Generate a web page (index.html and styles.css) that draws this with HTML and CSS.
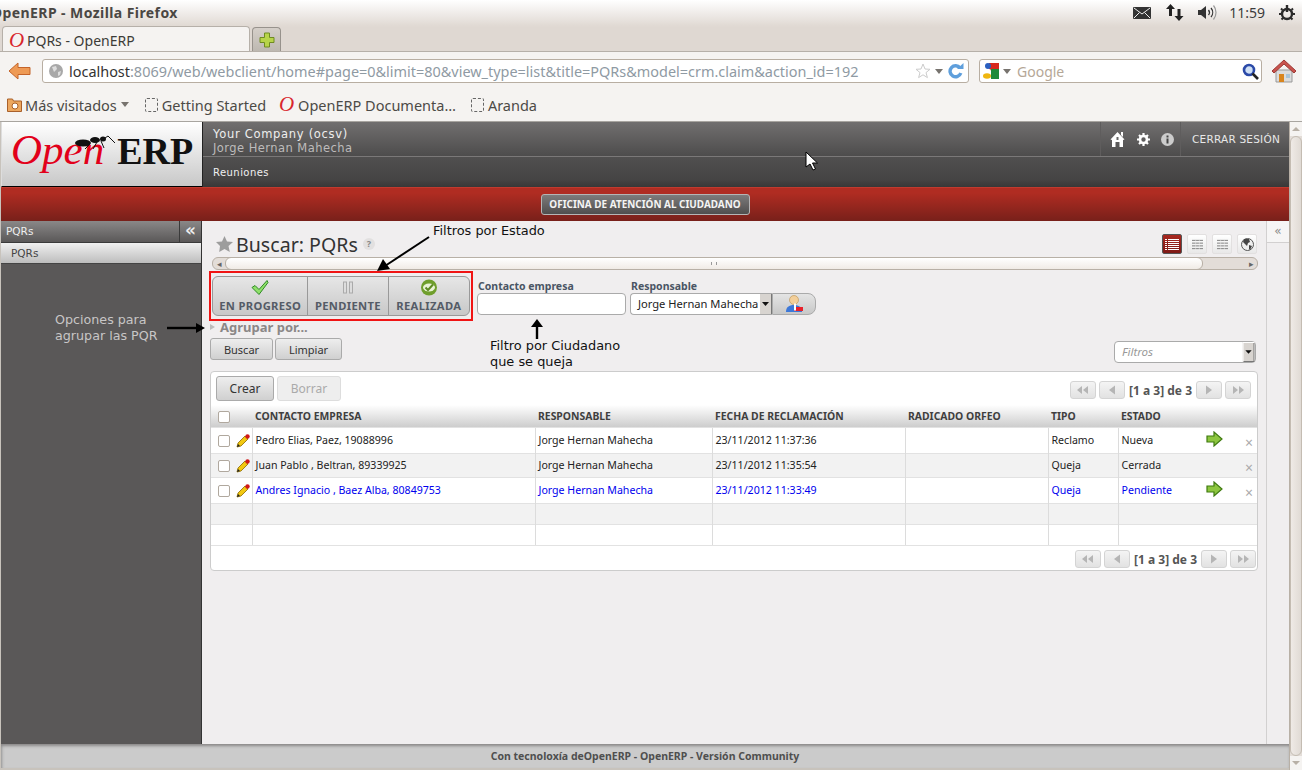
FILE: index.html
```html
<!DOCTYPE html>
<html lang="es">
<head>
<meta charset="utf-8">
<title>PQRs - OpenERP</title>
<link rel="stylesheet" href="styles.css">
</head>
<body>
<svg class="defs" width="0" height="0">
  <defs>
    <symbol id="i-first" viewBox="0 0 26 18"><path d="M7 9l5-4v8zM13 9l5-4v8z" fill="#b5b5b5"/></symbol>
    <symbol id="i-prev" viewBox="0 0 26 18"><path d="M10 9l6-4.500v9z" fill="#b5b5b5"/></symbol>
    <symbol id="i-next" viewBox="0 0 26 18"><path d="M16 9l-6-4.500v9z" fill="#b5b5b5"/></symbol>
    <symbol id="i-last" viewBox="0 0 26 18"><path d="M13 9l-5-4v8zM19 9l-5-4v8z" fill="#b5b5b5"/></symbol>
    <symbol id="i-pencil" viewBox="0 0 14 14"><path d="M1 13l1-4 7-7 3 3-7 7z" fill="#f2c811" stroke="#8a6a00" stroke-width=".8"/><path d="M1 13l1-3 2 2z" fill="#222"/><circle cx="11.500" cy="2.500" r="2.200" fill="#d01818"/></symbol>
    <symbol id="i-go" viewBox="0 0 17 16"><path d="M1 5h7V1l8 7-8 7v-4H1z" fill="#8dc63f" stroke="#3f7a10" stroke-width="1.200"/></symbol>
    <symbol id="i-lines" viewBox="0 0 14 12"><path d="M1 1.500h12M1 4.500h12M1 7.500h12M1 10.500h12" stroke="#777" stroke-width="1"/><path d="M5 1v11M9 1v11" stroke="#eee" stroke-width=".6"/></symbol>
    <symbol id="i-down" viewBox="0 0 13 22"><rect width="13" height="22" fill="#d8d4d0"/><path d="M0 0h13v1H1v21H0z" fill="#fff"/><path d="M12 1h1v21H1v-1h11z" fill="#777"/><path d="M3 9h7l-3.500 4z" fill="#111"/></symbol>
  </defs>
</svg>

<header class="chrome">
  <div class="titlebar">
    <span class="window-title">OpenERP - Mozilla Firefox</span>
    <div class="tray">
      <svg class="tray-mail" width="18" height="12" viewBox="0 0 18 12"><rect width="18" height="12" rx="1" fill="#333"/><path d="M1 1l8 6 8-6M1 11l5.500-5.500M17 11l-5.500-5.500" fill="none" stroke="#eee"/></svg>
      <svg class="tray-net" width="18" height="17" viewBox="0 0 18 17"><path d="M4.500 0L9 5H6v7H3V5H0zM13 17l-4.500-5h3V5h3v7h3z" fill="#222"/></svg>
      <svg class="tray-vol" width="20" height="17" viewBox="0 0 20 17"><path d="M0 6h3l5-4v13l-5-4H0z" fill="#333"/><path d="M10.500 6a4 4 0 010 5M13 4a7 7 0 010 9" fill="none" stroke="#333" stroke-width="1.300"/><path d="M15.500 1.500a11 11 0 010 14" fill="none" stroke="#999" stroke-width="1.200"/></svg>
      <span class="clock">11:59</span>
      <svg class="tray-power" width="16" height="16" viewBox="0 0 16 16"><circle cx="8" cy="9" r="5" fill="none" stroke="#2b2b2b" stroke-width="2.400"/><path d="M8 0v7" stroke="#2b2b2b" stroke-width="2.400"/><path d="M0 9h2M14 9h2M2 3.500l1.500 1.500M14 3.500L12.500 5M2.500 14.500L4 13M13.500 14.500L12 13" stroke="#2b2b2b" stroke-width="2"/></svg>
    </div>
  </div>
  <div class="tabstrip">
    <div class="tab"><span class="o-mark">O</span><span>PQRs - OpenERP</span></div>
    <div class="newtab"><svg width="16" height="16" viewBox="0 0 16 16"><path d="M5.500 1h5v4.500H15v5h-4.500V15h-5v-4.500H1v-5h4.500z" fill="#b7d44a" stroke="#6f8b22"/></svg></div>
  </div>
  <div class="navbar">
    <svg class="back" width="23" height="18" viewBox="0 0 23 18"><path d="M1 9l9-8v4.500h12v7H10V17z" fill="#ee9a55" stroke="#c4642a"/></svg>
    <div class="urlbar">
      <svg class="globe" width="14" height="14" viewBox="0 0 14 14"><circle cx="7" cy="7" r="7" fill="#a8a8a8"/><path d="M3 3l4-1 1 3-3 3zM9 8l3-1-1 4-2 1z" fill="#ddd"/></svg>
      <span class="url"><span class="url-host">localhost</span>:8069/web/webclient/home#page=0&amp;limit=80&amp;view_type=list&amp;title=PQRs&amp;model=crm.claim&amp;action_id=192</span>
      <svg class="star-o" width="16" height="16" viewBox="0 0 16 16"><path d="M8 1l2 5 5 .3-4 3.300 1.400 5L8 11.800l-4.400 2.800L5 9.600 1 6.300 6 6z" fill="#fff" stroke="#ccc"/></svg>
      <span class="caret-grey"></span>
      <svg class="reload" width="17" height="16" viewBox="0 0 17 16"><path d="M13 5a5.500 5.500 0 10.800 5" fill="none" stroke="#5f9fdc" stroke-width="3.400"/><path d="M10 6h6.500V0z" fill="#5f9fdc"/></svg>
    </div>
    <div class="searchbar">
      <svg class="gmark" width="16" height="16" viewBox="0 0 16 16"><rect x="6" width="10" height="8" fill="#d8281e"/><rect x="8" y="6" width="8" height="10" fill="#1f8a3a"/><circle cx="5" cy="3" r="3" fill="#2a5fc0"/><circle cx="6" cy="8" r="2" fill="#fff"/><ellipse cx="4" cy="13" rx="4" ry="2.800" fill="#efb60f"/></svg>
      <span class="caret-grey"></span>
      <span class="search-hint">Google</span>
      <svg class="magnify" width="17" height="17" viewBox="0 0 17 17"><circle cx="7" cy="7" r="5" fill="#cfe0f5" stroke="#2b4aa8" stroke-width="2.600"/><path d="M10.500 10.500L16 16" stroke="#222" stroke-width="2.600"/></svg>
    </div>
    <svg class="home" width="24" height="24" viewBox="0 0 24 24"><path d="M4 11h16v12H4z" fill="#dcdcdc" stroke="#999"/><path d="M0 12L12 1l12 11-2 2L12 5 2 14z" fill="#c9534d" stroke="#9c3a35"/><path d="M7 15h5v8H7z" fill="#d9851e"/><path d="M14 15h4v4h-4z" fill="#a9c4d8"/></svg>
  </div>
  <div class="bookmarks">
    <div class="bm bm-first">
      <svg width="15" height="15" viewBox="0 0 15 15"><path d="M.500 2h5l1 2h8v10.500H.500z" fill="#eca75f" stroke="#a9602a"/><circle cx="8" cy="9" r="3" fill="#fff" stroke="#a9602a"/></svg>
      <span>Más visitados</span><span class="caret-grey"></span>
    </div>
    <div class="bm bm-second"><span class="blank-page"></span><span>Getting Started</span></div>
    <div class="bm bm-third"><span class="o-mark o-small">O</span><span>OpenERP Documenta…</span></div>
    <div class="bm bm-fourth"><span class="blank-page"></span><span>Aranda</span></div>
  </div>
</header>

<div class="viewport">
  <div class="app">
    <div class="masthead">
      <div class="logo">
        <span class="logo-open">Open</span><span class="logo-erp">ERP</span>
        <svg class="ant" width="42" height="14" viewBox="0 0 42 14"><ellipse cx="8" cy="8" rx="8" ry="3.500" fill="#111"/><ellipse cx="20" cy="5" rx="5" ry="3" fill="#111"/><ellipse cx="28" cy="4" rx="3" ry="2.500" fill="#111"/><path d="M30 3l3-2 7 7M22 7l-4 7M26 6l3 7M15 9l-5 5" fill="none" stroke="#111"/></svg>
      </div>
      <div class="topnav">
        <div class="topnav-upper">
          <div class="account">
            <span class="company">Your Company (ocsv)</span>
            <span class="user">Jorge Hernan Mahecha</span>
          </div>
          <div class="top-icons">
            <svg width="15" height="17" viewBox="0 0 15 17"><path d="M7.500 1l7 7.500-1.500.5v7H9.500v-5h-4v5H2V9L.500 8.500z" fill="#fff"/><path d="M11 1h2v5l-2-2z" fill="#fff"/><path d="M6.500 6h2v3h-2z" fill="#666"/></svg>
            <svg width="13" height="13" viewBox="0 0 13 13"><circle cx="6.500" cy="6.500" r="3.500" fill="none" stroke="#fff" stroke-width="2.600"/><path d="M6.500 0v2.500M6.500 10.500V13M0 6.500h2.500M10.500 6.500H13M2 2l1.800 1.800M11 2L9.200 3.800M2 11l1.800-1.800M11 11L9.200 9.200" stroke="#fff" stroke-width="2.200"/></svg>
            <svg width="13" height="13" viewBox="0 0 13 13"><circle cx="6.500" cy="6.500" r="6.500" fill="#ccc"/><path d="M5.500 2.500h2v2h-2zM5.500 5.500h2v5h-2z" fill="#444"/></svg>
          </div>
          <div class="logout">CERRAR SESIÓN</div>
        </div>
        <div class="topnav-lower">Reuniones</div>
      </div>
    </div>
    <div class="redbar"><span class="office-btn">OFICINA DE ATENCIÓN AL CIUDADANO</span></div>
    <div class="work">
      <aside class="sidebar">
        <div class="side-head"><span class="side-title">PQRs</span><span class="side-toggle">«</span></div>
        <div class="side-item">PQRs</div>
      </aside>
      <main class="content">
        <div class="title-row">
          <svg class="fav" width="17" height="16" viewBox="0 0 17 16"><path d="M8.500 0l2.500 5.500 6 .6-4.500 4 1.300 5.900-5.300-3-5.300 3L4 10.100 0 6.100l6-.6z" fill="#9d9d9d"/></svg>
          <h1>Buscar: PQRs</h1>
          <span class="help">?</span>
          <div class="views">
            <span class="view view-on"><svg width="14" height="11" viewBox="0 0 14 11"><path d="M0 .5h14M0 2.500h14M0 4.500h14M0 6.500h14M0 8.500h14M0 10.500h14" stroke="#fff"/><path d="M2.500 0v11" stroke="#8a201b"/></svg></span>
            <span class="view"><svg width="13" height="11"><use href="#i-lines"/></svg></span>
            <span class="view"><svg width="13" height="11"><use href="#i-lines"/></svg></span>
            <span class="view"><svg width="13" height="13" viewBox="0 0 13 13"><circle cx="6.500" cy="6.500" r="6" fill="#eee" stroke="#555"/><path d="M3 1l5 0 1 3-2 1-1 3-2-2-2-2zM8 7l3 1-2 4-1-1z" fill="#444"/></svg></span>
          </div>
        </div>
        <div class="hscroll">
          <span class="hs-arrow">◂</span>
          <div class="hs-thumb"><span class="hs-grip"></span></div>
          <span class="hs-arrow hs-right">▸</span>
        </div>
        <div class="search-row">
          <div class="state-frame">
            <div class="states">
              <div class="state s1">
                <svg width="18" height="16" viewBox="0 0 18 16"><path d="M1 8l3-2 4 4 8-9 1 2-9 12z" fill="#8fe06a" stroke="#2f8a25"/></svg>
                <span>EN PROGRESO</span>
              </div>
              <div class="state s2">
                <svg width="10" height="12" viewBox="0 0 10 12"><rect x=".5" y=".5" width="3" height="11" fill="#ddd" stroke="#aaa"/><rect x="6.500" y=".5" width="3" height="11" fill="#ddd" stroke="#aaa"/></svg>
                <span>PENDIENTE</span>
              </div>
              <div class="state s3">
                <svg width="16" height="16" viewBox="0 0 16 16"><circle cx="8" cy="8" r="8" fill="#6f9e2c"/><ellipse cx="8" cy="8" rx="6" ry="4" fill="#e9f3d5"/><path d="M4.500 8l2.500 2.500L12 5" fill="none" stroke="#5d8a22" stroke-width="2"/></svg>
                <span>REALIZADA</span>
              </div>
            </div>
          </div>
          <div class="field field-contact">
            <label class="field-label" for="contact">Contacto empresa</label>
            <input class="text-input" id="contact" type="text">
          </div>
          <div class="field field-resp">
            <label class="field-label">Responsable</label>
            <div class="combo">
              <div class="combo-value"><span>Jorge Hernan Mahecha</span><svg width="13" height="22"><use href="#i-down"/></svg></div>
              <div class="combo-btn"><svg width="18" height="18" viewBox="0 0 18 18"><path d="M1 17c0-5 3-7 8-7s8 2 8 7z" fill="#3d78d8"/><circle cx="9" cy="5" r="4.500" fill="#f3cf9a" stroke="#b8914f" stroke-width=".6"/><rect x="9" y="12" width="9" height="4" fill="#e8202a"/><rect x="9" y="8.500" width="2" height="7" fill="#fff"/></svg></div>
            </div>
          </div>
        </div>
        <div class="groupby"><span class="gb-tri"></span><span>Agrupar por...</span></div>
        <div class="action-row">
          <button class="btn btn-search" type="button">Buscar</button>
          <button class="btn btn-clear" type="button">Limpiar</button>
          <div class="filters"><span>Filtros</span><svg width="13" height="20"><use href="#i-down"/></svg></div>
        </div>
        <section class="card">
          <div class="card-top">
            <button class="btn btn-create" type="button">Crear</button>
            <button class="btn btn-delete" type="button">Borrar</button>
            <div class="pager">
              <span class="pg"><svg width="26" height="18"><use href="#i-first"/></svg></span>
              <span class="pg"><svg width="26" height="18"><use href="#i-prev"/></svg></span>
              <span class="pg-text">[1 a 3] de 3</span>
              <span class="pg"><svg width="26" height="18"><use href="#i-next"/></svg></span>
              <span class="pg"><svg width="26" height="18"><use href="#i-last"/></svg></span>
            </div>
          </div>
          <table class="grid">
            <colgroup>
              <col class="c-sel"><col class="c-contact"><col class="c-resp"><col class="c-date"><col class="c-orfeo"><col class="c-type"><col class="c-state"><col class="c-go"><col class="c-del">
            </colgroup>
            <thead>
              <tr><th class="sel"><span class="check"></span></th><th>CONTACTO EMPRESA</th><th>RESPONSABLE</th><th>FECHA DE RECLAMACIÓN</th><th>RADICADO ORFEO</th><th>TIPO</th><th>ESTADO</th><th></th><th></th></tr>
            </thead>
            <tbody>
              <tr class="r-tall"><td class="sel"><span class="check"></span><svg class="pencil" width="14" height="14"><use href="#i-pencil"/></svg></td><td>Pedro Elias, Paez, 19088996</td><td>Jorge Hernan Mahecha</td><td>23/11/2012 11:37:36</td><td></td><td>Reclamo</td><td>Nueva</td><td class="open-lr"><svg width="17" height="16"><use href="#i-go"/></svg></td><td class="del">×</td></tr>
              <tr class="r-alt r-mid"><td class="sel"><span class="check"></span><svg class="pencil" width="14" height="14"><use href="#i-pencil"/></svg></td><td>Juan Pablo , Beltran, 89339925</td><td>Jorge Hernan Mahecha</td><td>23/11/2012 11:35:54</td><td></td><td>Queja</td><td>Cerrada</td><td class="open-lr"></td><td class="del">×</td></tr>
              <tr class="r-tall r-blue"><td class="sel"><span class="check"></span><svg class="pencil" width="14" height="14"><use href="#i-pencil"/></svg></td><td>Andres Ignacio , Baez Alba, 80849753</td><td>Jorge Hernan Mahecha</td><td>23/11/2012 11:33:49</td><td></td><td>Queja</td><td>Pendiente</td><td class="open-lr"><svg width="17" height="16"><use href="#i-go"/></svg></td><td class="del">×</td></tr>
              <tr class="r-alt r-empty"><td></td><td></td><td></td><td></td><td></td><td></td><td></td><td class="open-lr"></td><td class="open-l"></td></tr>
              <tr class="r-empty"><td></td><td></td><td></td><td></td><td></td><td></td><td></td><td class="open-lr"></td><td class="open-l"></td></tr>
            </tbody>
          </table>
          <div class="card-bottom">
            <div class="pager">
              <span class="pg"><svg width="26" height="18"><use href="#i-first"/></svg></span>
              <span class="pg"><svg width="26" height="18"><use href="#i-prev"/></svg></span>
              <span class="pg-text">[1 a 3] de 3</span>
              <span class="pg"><svg width="26" height="18"><use href="#i-next"/></svg></span>
              <span class="pg"><svg width="26" height="18"><use href="#i-last"/></svg></span>
            </div>
          </div>
        </section>
      </main>
      <div class="right-rail"><span class="rail-toggle">«</span></div>
    </div>
    <footer class="foot">Con tecnoloxía deOpenERP - OpenERP - Versión Community</footer>
  </div>
  <div class="vscroll"><span class="vs-arrow vs-up"></span><span class="vs-thumb"></span><span class="vs-arrow vs-down"></span></div>
</div>

<div class="note note-states">Filtros por Estado</div>
<div class="note note-citizen">Filtro por Ciudadano<br>que se queja</div>
<div class="note note-group">Opciones para<br>agrupar las PQR</div>
<svg class="arrow arrow-states" width="54" height="36" viewBox="0 0 54 36"><path d="M52 1L8 30" stroke="#000" stroke-width="2"/><path d="M0 35l6-12 7 10z" fill="#000"/></svg>
<svg class="arrow arrow-citizen" width="14" height="20" viewBox="0 0 14 20"><path d="M7 6v14" stroke="#000" stroke-width="2.400"/><path d="M7 0l6 8H1z" fill="#000"/></svg>
<svg class="arrow arrow-group" width="38" height="12" viewBox="0 0 38 12"><path d="M0 6h30" stroke="#000" stroke-width="2.400"/><path d="M38 6l-9 5V1z" fill="#000"/></svg>
<svg class="arrow cursor" width="14" height="20" viewBox="0 0 14 20"><path d="M1 1v15l4-3 3 6 2.500-1-3-6h5z" fill="#fff" stroke="#000"/></svg>
</body>
</html>
```

FILE: styles.css
```css
* { box-sizing: border-box; }
html, body { margin: 0; padding: 0; }
body {
  position: relative;
  width: 1302px;
  height: 770px;
  overflow: hidden;
  background: #c8c3bc;
  font-family: "Noto Sans", "Open Sans", sans-serif;
  color: #222;
}
.defs { position: absolute; }

/* browser chrome */
.chrome { height: 122px; background: #f5f3f1; }
.titlebar {
  height: 27px;
  padding-bottom: 2px;
  display: flex;
  align-items: center;
  justify-content: space-between;
  background: linear-gradient(#fff 0, #e0d9d3 26px);
  overflow: hidden;
}
.window-title {
  margin-left: -9px;
  font-size: 14px;
  font-weight: 700;
  color: #4a4743;
  letter-spacing: .42px;
}
.tray { display: flex; align-items: center; margin-right: 7px; }
.tray-net { margin-left: 15px; }
.tray-vol { margin-left: 14px; }
.clock { margin-left: 11px; font-size: 14px; color: #3c3c3c; }
.tray-power { margin-left: 14px; }
.tabstrip {
  height: 25px;
  display: flex;
  align-items: flex-end;
  padding-left: 2px;
  background: #dfd8d2;
  border-bottom: 1px solid #b6b0a9;
}
.tab {
  width: 248px;
  height: 25px;
  display: flex;
  align-items: center;
  padding: 2px 0 0 6px;
  font-size: 14px;
  color: #3c3b37;
  background: #f5f3f1;
  border: 1px solid #b6b0a9;
  border-bottom: 0;
  border-radius: 4px 4px 0 0;
}
.o-mark {
  width: 18px;
  font-family: "Liberation Serif", serif;
  font-style: italic;
  font-size: 21px;
  line-height: 1;
  color: #d8262c;
}
.newtab {
  width: 29px;
  height: 24px;
  margin-left: 2px;
  display: flex;
  align-items: center;
  justify-content: center;
  background: linear-gradient(#d5cfc9, #bdb8b1);
  border: 1px solid #97928c;
  border-bottom: 0;
  border-radius: 4px 4px 0 0;
}
.navbar {
  height: 38px;
  display: flex;
  align-items: center;
  padding: 0 0 0 8px;
}
.urlbar, .searchbar {
  height: 24px;
  display: flex;
  align-items: center;
  background: #fff;
  border: 1px solid #b8aea2;
  border-radius: 3px;
}
.urlbar { width: 927px; margin-left: 11px; padding-left: 6px; }
.globe { flex: none; }
.url {
  flex: 1;
  margin-left: 6px;
  white-space: nowrap;
  overflow: hidden;
  font-size: 14.450px;
  color: #8f9aa3;
}
.url-host { color: #333; }
.star-o { margin-left: 4px; }
.caret-grey {
  display: inline-block;
  width: 0;
  height: 0;
  border-left: 4px solid transparent;
  border-right: 4px solid transparent;
  border-top: 5px solid #77736e;
}
.urlbar .caret-grey { margin: 0 4px 0 4px; }
.reload { margin-right: 4px; }
.searchbar { width: 283px; margin-left: 10px; padding: 0 2px 0 3px; }
.searchbar .caret-grey { margin-left: 4px; }
.search-hint { flex: 1; margin-left: 6px; font-size: 14px; color: #b5a797; }
.home { margin-left: 10px; }
.bookmarks {
  height: 32px;
  display: flex;
  align-items: center;
  padding: 0 0 2px 7px;
  border-bottom: 1px solid #a8a5a0;
  font-size: 14.500px;
  color: #4c4a46;
}
.bm { display: flex; align-items: center; }
.bm-first span:first-of-type { margin-left: 3px; }
.bm-first .caret-grey { margin-left: 4px; }
.bm-second { margin-left: 16px; }
.bm-third { margin-left: 13px; }
.bm-fourth { margin-left: 15px; }
.blank-page {
  width: 13px;
  height: 14px;
  margin-right: 4px;
  border: 1px dashed #666;
  border-radius: 2px;
}
.o-small { width: 19px; }

/* app */
.viewport { height: 648px; display: flex; }
.app {
  width: 1289px;
  height: 646px;
  padding-left: 1px;
  display: flex;
  flex-direction: column;
}
.masthead { height: 65px; display: flex; }
.logo {
  position: relative;
  width: 201px;
  display: flex;
  align-items: baseline;
  padding: 4px 0 0 9px;
  background: linear-gradient(#fff, #c8c8c8);
  border-bottom: 1px solid #000;
  border-left: 1px solid #ddd;
}
.logo-open {
  font-family: "Liberation Serif", serif;
  font-style: italic;
  font-size: 43px;
  line-height: 48px;
  color: #e2001a;
}
.logo-erp {
  margin-left: 13px;
  font-family: "Liberation Serif", serif;
  font-weight: 700;
  font-size: 38px;
  line-height: 48px;
  color: #111;
}
.ant { position: absolute; left: 73px; top: 13px; }
.topnav {
  flex: 1;
  display: flex;
  flex-direction: column;
  font-family: "DejaVu Sans", sans-serif;
  border-left: 1px solid #222;
}
.topnav-upper {
  height: 35px;
  display: flex;
  align-items: stretch;
  background: linear-gradient(#716f6f, #4d4c4c);
  border-bottom: 1px solid #7a7878;
}
.account {
  flex: 1;
  display: flex;
  flex-direction: column;
  justify-content: center;
  padding: 3px 0 0 10px;
  font-size: 11.500px;
  line-height: 14px;
}
.company { color: #eee; letter-spacing: .7px; }
.user { color: #bdbbbb; letter-spacing: .45px; }
.top-icons {
  width: 81px;
  display: flex;
  align-items: center;
  justify-content: space-between;
  padding: 0 6px 0 9px;
  border-left: 1px solid #5f5d5d;
  border-right: 1px solid #5f5d5d;
}
.logout {
  width: 108px;
  padding: 11px 0 0 11px;
  font-size: 10.500px;
  letter-spacing: .22px;
  color: #e8e8e8;
}
.topnav-lower {
  height: 30px;
  padding: 10px 0 0 10px;
  font-size: 10px;
  letter-spacing: .45px;
  color: #f0f0f0;
  background: linear-gradient(#504f4f, #454444 75%, #383737);
}
.redbar {
  height: 34px;
  display: flex;
  justify-content: center;
  padding: 6px 0 0 0;
  background: linear-gradient(#b02c22, #b02c22 15%, #78201a);
  border-top: 1px solid #c03a2e;
}
.office-btn {
  width: 209px;
  height: 21px;
  font-family: "Noto Sans", sans-serif;
  font-size: 9.950px;
  font-weight: 700;
  line-height: 19px;
  text-align: center;
  white-space: nowrap;
  color: #f4f4f4;
  background: linear-gradient(#7d7b7b, #4f4e4e);
  border: 1px solid #b5b5b5;
  border-radius: 3px;
}
.work { flex: 1; min-height: 0; display: flex; }
.sidebar {
  width: 201px;
  background: #5a5858;
  border-right: 1px solid #333;
}
.side-head {
  height: 22px;
  display: flex;
  align-items: center;
  justify-content: space-between;
  background: linear-gradient(#8a8888, #5a5858);
  border-bottom: 1px solid #3a3a3a;
  font-family: "DejaVu Sans", sans-serif;
  color: #eee;
  font-size: 10.500px;
}
.side-title { padding: 0 0 2px 5px; }
.side-toggle {
  width: 22px;
  height: 21px;
  text-align: center;
  font-size: 17px;
  line-height: 18px;
  font-weight: 700;
  border-left: 1px solid #3a3a3a;
}
.side-item {
  height: 21px;
  margin-top: 0;
  padding: 4px 0 0 10px;
  font-family: "DejaVu Sans", sans-serif;
  font-size: 10.500px;
  color: #444;
  background: linear-gradient(#f0f0f0, #bdbdbd);
  border-bottom: 1px solid #444;
}
.content {
  width: 1064px;
  background: #f0eeef;
  display: flex;
  flex-direction: column;
  padding: 10px 8px 0 8px;
}
.title-row { height: 26px; display: flex; align-items: center; padding-left: 6px; }
.fav { flex: none; }
h1 {
  margin: 0 0 0 3px;
  font-size: 19.600px;
  font-weight: 400;
  color: #333;
  white-space: nowrap;
}
.help {
  width: 12px;
  height: 12px;
  margin-left: 5px;
  border-radius: 50%;
  background: #e2e0e0;
  color: #888;
  font-size: 9px;
  font-weight: 700;
  line-height: 12px;
  text-align: center;
}
.views { margin-left: auto; margin-right: 1px; display: flex; gap: 5px; }
.view {
  width: 20px;
  height: 20px;
  display: flex;
  align-items: center;
  justify-content: center;
  background: linear-gradient(#fff, #e8e8e8);
  border-radius: 2px;
  border: 1px solid #e2e0e0;
}
.view-on { background: linear-gradient(#a8281f, #7e1a16); border-color: #555; }
.hscroll {
  height: 13px;
  margin: 0 0 0 2px;
  width: 1046px;
  display: flex;
  align-items: center;
  justify-content: space-between;
  position: relative;
  background: #e3ddd8;
  border: 1px solid #b8b0a6;
  border-radius: 6px;
}
.hs-arrow { width: 13px; font-size: 9px; line-height: 11px; text-align: center; color: #666; }
.hs-right { width: 11px; }
.hs-thumb {
  position: absolute;
  left: 12px;
  top: -1px;
  width: 978px;
  height: 13px;
  display: flex;
  align-items: center;
  justify-content: center;
  background: linear-gradient(#fff, #f0ebe6);
  border: 1px solid #b8b0a6;
  border-radius: 6px;
}
.hs-grip { width: 6px; height: 3px; border-left: 1px solid #999; border-right: 1px solid #999; }
.search-row { height: 50px; display: flex; margin-top: 1px; }
.state-frame {
  width: 264px;
  height: 50px;
  margin-left: -1px;
  padding: 3px 1px;
  border: 2px solid #f01414;
}
.states {
  height: 40px;
  display: flex;
  background: linear-gradient(#e6e6e6, #c8c8c8);
  border: 1px solid #999;
  border-radius: 6px;
}
.state {
  display: flex;
  flex-direction: column;
  align-items: center;
  justify-content: space-between;
  padding: 2px 0 2px;
  font-size: 11.200px;
  font-weight: 700;
  letter-spacing: .35px;
  color: #545b66;
  line-height: 14px;
}
.state svg { height: 17px; }
.s1 { width: 96px; border-right: 1px solid #999; }
.s2 { width: 81px; border-right: 1px solid #999; }
.s3 { width: 81px; }
.field { display: flex; flex-direction: column; }
.field-label {
  height: 17px;
  padding: 5px 0 0 1px;
  font-size: 10.500px;
  line-height: 10px;
  font-weight: 700;
  color: #4a5564;
}
.field-contact { margin-left: 4px; width: 149px; margin-top: 5px; }
.field-resp { margin-left: 4px; margin-top: 5px; }
.text-input {
  width: 149px;
  height: 22px;
  margin: 0;
  background: #fff;
  border: 1px solid #aaa;
  border-radius: 4px;
}
.combo { display: flex; height: 22px; }
.combo-value {
  width: 142px;
  display: flex;
  align-items: center;
  justify-content: space-between;
  padding: 0 0 1px 7px;
  background: #fff;
  border: 1px solid #aaa;
  border-right: 0;
  border-radius: 4px 0 0 4px;
  font-size: 11.150px;
  white-space: nowrap;
  overflow: hidden;
  color: #222;
}
.combo-value svg { margin-top: 1px; }
.combo-btn {
  width: 44px;
  display: flex;
  align-items: center;
  justify-content: center;
  background: linear-gradient(#e4e4e4, #c8c8c8);
  border: 1px solid #aaa;
  border-radius: 0 8px 8px 0;
}
.groupby {
  height: 12px;
  margin-top: 0;
  display: flex;
  align-items: center;
  font-size: 13px;
  font-weight: 700;
  color: #8b8787;
}
.gb-tri {
  width: 0;
  height: 0;
  margin: 0 5px 0 0;
  border-left: 5px solid #bbb;
  border-top: 3.500px solid transparent;
  border-bottom: 3.500px solid transparent;
}
.action-row { height: 33px; display: flex; align-items: flex-start; margin-top: 5px; }
.btn {
  height: 22px;
  padding: 0;
  font-family: "Noto Sans", sans-serif;
  font-size: 11px;
  color: #333;
  background: linear-gradient(#eee, #d0d0d0);
  border: 1px solid #aaa;
  border-radius: 3px;
}
.btn-search { width: 63px; }
.btn-clear { width: 67px; margin-left: 2px; }
.filters {
  width: 142px;
  height: 22px;
  margin: 3px 2px 0 auto;
  display: flex;
  align-items: center;
  justify-content: space-between;
  padding: 0 0 1px 7px;
  background: #fff;
  border: 1px solid #aaa;
  border-radius: 4px;
  font-size: 11.500px;
  font-style: italic;
  color: #999;
}
.card {
  width: 1048px;
  height: 200px;
  background: #fff;
  border: 1px solid #ccc;
  border-radius: 4px;
}
.card-top { height: 33px; display: flex; align-items: flex-start; padding: 4px 6px 0 5px; }
.btn-create { width: 58px; height: 25px; font-size: 12px; }
.btn-delete {
  width: 64px;
  height: 25px;
  margin-left: 3px;
  font-size: 12px;
  color: #aaa;
  background: #eeeeee;
  border-color: #ddd;
}
.pager { margin-left: auto; display: flex; align-items: center; gap: 3px; padding-top: 5px; }
.pg {
  width: 26px;
  height: 18px;
  display: block;
  background: linear-gradient(#f4f4f4, #e2e2e2);
  border: 1px solid #d4d4d4;
  border-radius: 3px;
}
.pg svg { display: block; margin: -1px; }
.pg-text { margin: 0 1px; font-size: 12px; font-weight: 700; color: #555; white-space: nowrap; }
.grid {
  width: 1046px;
  table-layout: fixed;
  border-collapse: collapse;
  font-size: 10.600px;
}
.c-sel { width: 41px; }
.c-contact { width: 283px; }
.c-resp { width: 177px; }
.c-date { width: 193px; }
.c-orfeo { width: 143px; }
.c-type { width: 70px; }
.c-state { width: 82px; }
.c-go { width: 40px; }
.c-del { width: 17px; }
.grid th {
  height: 22px;
  padding: 0 0 0 3px;
  text-align: left;
  font-size: 10.400px;
  font-weight: 700;
  white-space: nowrap;
  color: #3f3f3f;
  background: linear-gradient(#fff, #cdcdcd);
}
.grid td {
  padding: 0 0 0 3px;
  white-space: nowrap;
  color: #222;
  border-left: 1px solid #dcdcdc;
  border-top: 1px solid #e2e2e2;
}
.grid td:first-child { border-left: 0; }
.r-tall td { height: 26px; }
.r-mid td { height: 24px; }
.r-empty td { height: 21px; }
.r-alt td { background: #f2f2f2; }
.grid .r-blue td { color: #0000ee; }
.grid .sel { padding: 0 0 0 7px; }
.check {
  display: inline-block;
  width: 12px;
  height: 12px;
  vertical-align: middle;
  background: #fff;
  border: 1px solid #b0a89e;
  border-radius: 2px;
}
.pencil { margin-left: 6px; vertical-align: middle; }
.grid td.open-lr { border-left: 0; padding-left: 6px; }
.grid td.open-lr svg { display: block; margin-top: -3px; }
.grid td.open-l { border-left: 0; }
.grid td.del {
  border-left: 0;
  padding: 6px 0 0 5px;
  text-align: left;
  font-size: 14px;
  line-height: 14px;
  color: #aaa;
}
.card-bottom { height: 25px; padding-right: 1px; display: flex; border-top: 1px solid #e2e2e2; }
.card-bottom .pager { padding-top: 2px; align-items: center; }
.right-rail {
  width: 23px;
  background: #f0eeef;
  border-left: 1px solid #d2d0d0;
}
.rail-toggle {
  display: block;
  height: 22px;
  text-align: center;
  font-family: "DejaVu Sans", sans-serif;
  font-size: 12px;
  line-height: 20px;
  color: #8a8a8a;
  background: #f6f5f5;
  border-bottom: 1px solid #d2d0d0;
}
.foot {
  height: 24px;
  flex: none;
  text-align: center;
  font-size: 10.500px;
  font-weight: 700;
  line-height: 25px;
  color: #4f4f4f;
  background: #cbcbcb;
  box-shadow: inset 0 3px 3px -1px #8a8888, inset 3px 0 3px -2px #999;
}
.vscroll {
  width: 13px;
  display: flex;
  flex-direction: column;
  background: #e3ddd8;
  border-left: 1px solid #b8b0a6;
}
.vs-arrow {
  height: 14px;
  flex: none;
  display: flex;
  align-items: center;
  justify-content: center;
  background: #f5f3f1;
}
.vs-arrow::after {
  content: "";
  width: 0;
  height: 0;
  border-left: 4px solid transparent;
  border-right: 4px solid transparent;
}
.vs-up::after { border-bottom: 4px solid #b8b0a6; }
.vs-down::after { border-top: 4px solid #b8b0a6; }
.vs-thumb {
  flex: 1;
  background: linear-gradient(90deg, #efeae6, #e0dad4);
  border: 1px solid #c4bcb2;
  border-radius: 6px;
}

/* annotations over the page */
.note {
  position: absolute;
  font-family: "DejaVu Sans", sans-serif;
  font-size: 12.900px;
  line-height: 16px;
  color: #111;
  white-space: nowrap;
}
.note-states { left: 433px; top: 223px; }
.note-citizen { left: 490px; top: 338px; }
.note-group { left: 55px; top: 312px; color: #c8c6c6; font-size: 12.700px; }
.arrow { position: absolute; }
.arrow-states { left: 377px; top: 236px; }
.arrow-citizen { left: 530px; top: 319px; }
.arrow-group { left: 167px; top: 322px; }
.cursor { left: 805px; top: 151px; }
```
